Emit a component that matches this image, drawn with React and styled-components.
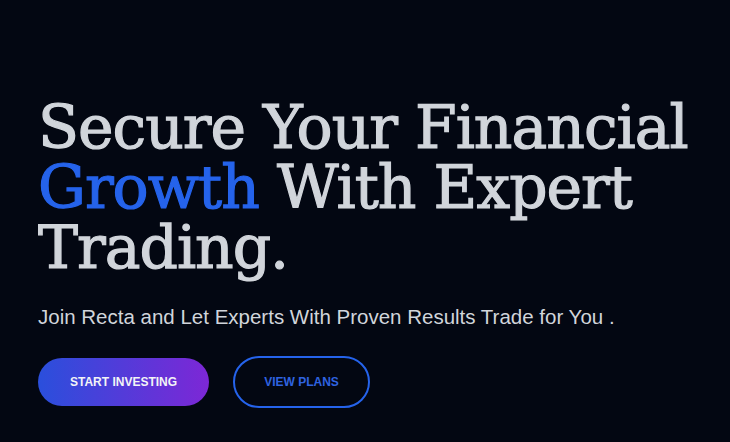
import React from 'react';
import styled, { createGlobalStyle } from 'styled-components';

const GlobalStyle = createGlobalStyle`
  html, body {
    margin: 0;
    padding: 0;
    background: #030712;
  }
`;

const Hero = styled.section`
  width: 730px;
  height: 442px;
  box-sizing: border-box;
  padding: 97px 38px 0;
  background: #030712;
  overflow: hidden;
`;

const Title = styled.h1`
  margin: 0;
  font-family: 'DejaVu Serif', serif;
  font-weight: 400;
  font-size: 60px;
  line-height: 60px;
  letter-spacing: -1px;
  color: #d1d5db;
  -webkit-text-stroke: 1.2px #d1d5db;
`;

const Accent = styled.span`
  color: #2563eb;
  -webkit-text-stroke: 1.2px #2563eb;
`;

const Lead = styled.p`
  margin: 28px 0 0;
  font-family: 'Liberation Sans', sans-serif;
  font-size: 20.5px;
  color: #d1d5db;
`;

const Actions = styled.div`
  display: flex;
  align-items: center;
  gap: 24px;
  margin-top: 27px;
`;

const Button = styled.button`
  height: ${(p) => (p.$outline ? '52px' : '48px')};
  padding: 0 ${(p) => (p.$outline ? '29px' : '32px')};
  border-radius: 999px;
  font-family: 'Liberation Sans', sans-serif;
  font-weight: 700;
  font-size: 12px;
  text-transform: uppercase;
  cursor: pointer;
  color: ${(p) => (p.$outline ? '#2f63e0' : '#f3f4f6')};
  background: ${(p) =>
    p.$outline ? 'transparent' : 'linear-gradient(90deg, #2a4fdc, #7d27d6)'};
  border: ${(p) => (p.$outline ? '2px solid #2563eb' : 'none')};
`;

export default function App() {
  return (
    <>
      <GlobalStyle />
      <Hero>
        <Title>
          Secure Your Financial <Accent>Growth</Accent> With Expert Trading.
        </Title>
        <Lead>Join Recta and Let Experts With Proven Results Trade for You .</Lead>
        <Actions>
          <Button>Start Investing</Button>
          <Button $outline>View Plans</Button>
        </Actions>
      </Hero>
    </>
  );
}
